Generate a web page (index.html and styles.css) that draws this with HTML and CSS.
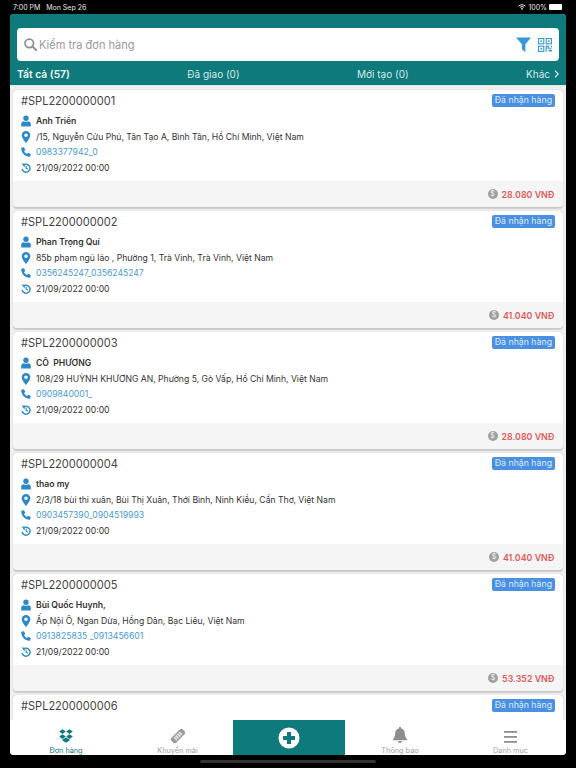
FILE: index.html
```html
<!DOCTYPE html>
<html lang="vi">
<head>
    <meta charset="UTF-8">
    <meta name="viewport" content="width=device-width, initial-scale=1.0">
    <title>Đơn hàng</title>
    <link rel="stylesheet" href="styles.css">
</head>
<body>
    <svg class="icon-defs" width="0" height="0">
        <symbol id="i-user" viewBox="0 0 10 11"><circle cx="5" cy="2.8" r="2.7"/><path d="M0.2 11V8.2C0.2 6.6 1.5 5.7 2.8 5.7C3.4 6.1 4.2 6.3 5 6.3C5.8 6.3 6.6 6.1 7.2 5.7C8.5 5.7 9.8 6.6 9.8 8.2V11Z"/></symbol>
        <symbol id="i-pin" viewBox="0 0 10 14"><path fill-rule="evenodd" d="M5 0C2.2 0 0 2.2 0 5C0 8.4 5 14 5 14C5 14 10 8.4 10 5C10 2.2 7.8 0 5 0ZM5 7.1A2.1 2.1 0 1 1 5 2.9A2.1 2.1 0 0 1 5 7.1Z"/></symbol>
        <symbol id="i-phone" viewBox="0 0 12 12"><path d="M2.9 0.3L0.9 0.9C0.4 1.1 0.1 1.5 0.2 2C0.8 7.4 4.6 11.2 10 11.8C10.5 11.9 10.9 11.6 11.1 11.1L11.7 9.1C11.8 8.8 11.7 8.5 11.4 8.3L9 7C8.7 6.9 8.4 6.9 8.2 7.2L7.2 8.4C5.7 7.6 4.4 6.3 3.6 4.8L4.8 3.8C5.1 3.6 5.1 3.3 5 3L3.7 0.6C3.5 0.3 3.2 0.2 2.9 0.3Z"/></symbol>
        <symbol id="i-history" viewBox="0 0 14 14"><path fill="none" stroke="currentColor" stroke-width="2" d="M3.2 3.1A5.6 5.6 0 1 1 1.5 8.2"/><path d="M0.4 0.8L5.4 0.8L5.4 5.8Z" transform="rotate(12 3 3)"/><path fill="none" stroke="currentColor" stroke-width="1.6" d="M7.2 3.8V7.3L9.6 8.6"/></symbol>
    </svg>

    <div class="status-bar">
        <span>7:00 PM&nbsp;&nbsp; Mon Sep 26</span>
        <div class="status-right">
            <svg width="8" height="6" viewBox="0 0 12 9" fill="none" stroke="#e8e8e8" stroke-width="1.5"><path d="M0.8 3.2C3.8 0.4 8.2 0.4 11.2 3.2M2.8 5.2C4.7 3.6 7.3 3.6 9.2 5.2"/><path fill="#e8e8e8" stroke="none" d="M6 9L4.2 7C5.2 6.2 6.8 6.2 7.8 7Z"/></svg>
            <span>100%</span>
            <div class="battery"></div>
        </div>
    </div>

    <div class="app">
        <header class="header">
            <div class="search">
                <svg class="search-icon" width="13" height="13" viewBox="0 0 14 14"><circle cx="5.7" cy="5.7" r="4.6" fill="none" stroke="#8e8e8e" stroke-width="1.9"/><path d="M9 9L13 13" stroke="#8e8e8e" stroke-width="2.2" stroke-linecap="round"/></svg>
                <span class="search-text">Kiểm tra đơn hàng</span>
                <svg class="filter-icon" width="15" height="15" viewBox="0 0 15 15"><path fill="#3a97d9" d="M0 0.5H15L9.4 7.2V15L5.9 12.2V7.2Z"/></svg>
                <svg class="qr-icon" width="14" height="14" viewBox="0 0 15 15" fill="none" stroke="#3a97d9"><rect x="0.6" y="0.6" width="5.6" height="5.6" stroke-width="1.2"/><rect x="8.8" y="0.6" width="5.6" height="5.6" stroke-width="1.2"/><rect x="0.6" y="8.8" width="5.6" height="5.6" stroke-width="1.2"/><rect x="2.6" y="2.6" width="1.7" height="1.7" fill="#3a97d9" stroke="none"/><rect x="10.7" y="2.6" width="1.7" height="1.7" fill="#3a97d9" stroke="none"/><rect x="2.6" y="10.7" width="1.7" height="1.7" fill="#3a97d9" stroke="none"/><path stroke-width="1.3" d="M8.8 14.8V8.8H11V11H14.4M14.4 8.2V10M11.2 13.2H15M12 15H15"/></svg>
            </div>
            <nav class="tabs">
                <span class="tab active">Tất cả (57)</span>
                <span class="tab">Đã giao (0)</span>
                <span class="tab">Mới tạo (0)</span>
                <span class="tab">Khác <svg width="5" height="8" viewBox="0 0 5 8"><path d="M1 0.7L4.2 4L1 7.3" fill="none" stroke="#e6f2f2" stroke-width="1.1"/></svg></span>
            </nav>
        </header>

        <main class="orders">
            <article class="card">
                <div class="card-body">
                    <div class="card-top"><span class="code">#SPL2200000001</span><span class="badge">Đã nhận hàng</span></div>
                    <div class="row name"><svg class="ico"><use href="#i-user"/></svg>Anh Triển</div>
                    <div class="row"><svg class="ico"><use href="#i-pin"/></svg>/15, Nguyễn Cửu Phú, Tân Tạo A, Bình Tân, Hồ Chí Minh, Việt Nam</div>
                    <div class="row phone"><svg class="ico"><use href="#i-phone"/></svg>0983377942_0</div>
                    <div class="row"><svg class="ico"><use href="#i-history"/></svg>21/09/2022 00:00</div>
                </div>
                <div class="card-foot"><span class="coin">$</span><span class="price">28.080 VNĐ</span></div>
            </article>

            <article class="card">
                <div class="card-body">
                    <div class="card-top"><span class="code">#SPL2200000002</span><span class="badge">Đã nhận hàng</span></div>
                    <div class="row name"><svg class="ico"><use href="#i-user"/></svg>Phan Trọng Quí</div>
                    <div class="row"><svg class="ico"><use href="#i-pin"/></svg>85b phạm ngũ lão , Phường 1, Trà Vinh, Trà Vinh, Việt Nam</div>
                    <div class="row phone"><svg class="ico"><use href="#i-phone"/></svg>0356245247_0356245247</div>
                    <div class="row"><svg class="ico"><use href="#i-history"/></svg>21/09/2022 00:00</div>
                </div>
                <div class="card-foot"><span class="coin">$</span><span class="price">41.040 VNĐ</span></div>
            </article>

            <article class="card">
                <div class="card-body">
                    <div class="card-top"><span class="code">#SPL2200000003</span><span class="badge">Đã nhận hàng</span></div>
                    <div class="row name"><svg class="ico"><use href="#i-user"/></svg>CÔ&nbsp; PHƯƠNG</div>
                    <div class="row"><svg class="ico"><use href="#i-pin"/></svg>108/29 HUỲNH KHƯƠNG AN, Phường 5, Gò Vấp, Hồ Chí Minh, Việt Nam</div>
                    <div class="row phone"><svg class="ico"><use href="#i-phone"/></svg>0909840001_</div>
                    <div class="row"><svg class="ico"><use href="#i-history"/></svg>21/09/2022 00:00</div>
                </div>
                <div class="card-foot"><span class="coin">$</span><span class="price">28.080 VNĐ</span></div>
            </article>

            <article class="card">
                <div class="card-body">
                    <div class="card-top"><span class="code">#SPL2200000004</span><span class="badge">Đã nhận hàng</span></div>
                    <div class="row name"><svg class="ico"><use href="#i-user"/></svg>thao my</div>
                    <div class="row"><svg class="ico"><use href="#i-pin"/></svg>2/3/18 bùi thi xuân, Bùi Thị Xuân, Thới Bình, Ninh Kiều, Cần Thơ, Việt Nam</div>
                    <div class="row phone"><svg class="ico"><use href="#i-phone"/></svg>0903457390_0904519993</div>
                    <div class="row"><svg class="ico"><use href="#i-history"/></svg>21/09/2022 00:00</div>
                </div>
                <div class="card-foot"><span class="coin">$</span><span class="price">41.040 VNĐ</span></div>
            </article>

            <article class="card">
                <div class="card-body">
                    <div class="card-top"><span class="code">#SPL2200000005</span><span class="badge">Đã nhận hàng</span></div>
                    <div class="row name"><svg class="ico"><use href="#i-user"/></svg>Bùi Quốc Huynh,</div>
                    <div class="row"><svg class="ico"><use href="#i-pin"/></svg>Ấp Nội Ô, Ngan Dừa, Hồng Dân, Bạc Liêu, Việt Nam</div>
                    <div class="row phone"><svg class="ico"><use href="#i-phone"/></svg>0913825835 _0913456601</div>
                    <div class="row"><svg class="ico"><use href="#i-history"/></svg>21/09/2022 00:00</div>
                </div>
                <div class="card-foot"><span class="coin">$</span><span class="price">53.352 VNĐ</span></div>
            </article>

            <article class="card">
                <div class="card-body">
                    <div class="card-top"><span class="code">#SPL2200000006</span><span class="badge">Đã nhận hàng</span></div>
                </div>
            </article>
        </main>

        <nav class="tabbar">
            <div class="tabbar-item active">
                <svg width="14" height="14" viewBox="0 0 14 14" fill="#0f7a7c"><path d="M3.5 0.3L6.8 2.6L3.5 4.9L0.2 2.6ZM10.5 0.3L13.8 2.6L10.5 4.9L7.2 2.6ZM3.5 5.3L6.8 7.6L3.5 9.9L0.2 7.6ZM10.5 5.3L13.8 7.6L10.5 9.9L7.2 7.6ZM3.5 10.6L7 8.4L10.5 10.6V11.4L7 13.7L3.5 11.4Z"/></svg>
                <span>Đơn hàng</span>
            </div>
            <div class="tabbar-item">
                <svg width="14" height="14" viewBox="0 0 14 14"><g transform="rotate(-45 7 7)"><rect x="-1" y="3.6" width="16" height="6.8" rx="0.8" fill="#9a9a9a"/><rect x="2.5" y="5" width="9" height="4" fill="#e4e4e4"/><path d="M4.5 5V9M7 5V9M9.5 5V9" stroke="#9a9a9a" stroke-width="0.9"/></g></svg>
                <span>Khuyến mãi</span>
            </div>
            <div class="tabbar-add">
                <svg width="22" height="22" viewBox="0 0 22 22"><circle cx="11" cy="11" r="10.5" fill="#fff"/><path d="M11 5V17M5 11H17" stroke="#0f7a7c" stroke-width="4"/></svg>
            </div>
            <div class="tabbar-item">
                <svg width="14" height="16" viewBox="0 0 14 16" fill="#8e8e8e"><path d="M7 0C6.3 0 5.9 0.5 5.9 1.1V1.6C3.6 2.1 2.2 4 2.2 6.3C2.2 9.6 1.4 10.6 0 12.2V13.2H14V12.2C12.6 10.6 11.8 9.6 11.8 6.3C11.8 4 10.4 2.1 8.1 1.6V1.1C8.1 0.5 7.7 0 7 0ZM5 14C5 15.1 5.9 16 7 16C8.1 16 9 15.1 9 14Z"/></svg>
                <span>Thông báo</span>
            </div>
            <div class="tabbar-item">
                <svg width="13" height="12" viewBox="0 0 13 12" fill="#8e8e8e"><rect width="13" height="1.8"/><rect y="5" width="13" height="1.8"/><rect y="10" width="13" height="1.8"/></svg>
                <span>Danh mục</span>
            </div>
        </nav>
    </div>

    <div class="home-strip"><div class="home-indicator"></div></div>
</body>
</html>
```

FILE: styles.css
```css
:root {
    --teal: #0f7a7c;
    --blue: #3a97d9;
    --text: #333333;
    --gray: #8e8e8e;
}

* {
    margin: 0;
    padding: 0;
    box-sizing: border-box;
    font-family: "Inter", "Liberation Sans", sans-serif;
}

html, body {
    height: 768px;
    overflow: hidden;
}

body {
    background-color: #000;
    display: flex;
    flex-direction: column;
}

.icon-defs {
    position: absolute;
}

.status-bar {
    height: 14px;
    padding: 0 14px 0 13px;
    display: flex;
    justify-content: space-between;
    align-items: center;
    color: #e8e8e8;
    font-size: 7px;
}

.status-right {
    display: flex;
    align-items: center;
    gap: 2px;
}

.battery {
    width: 13px;
    height: 6px;
    background-color: #fff;
    border-radius: 1px;
}

.app {
    height: 741px;
    margin: 0 10px;
    background-color: #efefef;
    border-radius: 4px;
    overflow: hidden;
    display: flex;
    flex-direction: column;
}

.header {
    background-color: var(--teal);
    padding: 14px 7px 0;
    flex-shrink: 0;
    height: 72px;
    border-bottom: 1px solid #d8eeee;
}

.search {
    height: 33px;
    background-color: #fff;
    border-radius: 4px;
    display: flex;
    align-items: center;
    padding: 0 7px;
}

.search-text {
    flex: 1;
    margin-left: 2px;
    font-size: 11.05px;
    color: #9a9a9a;
}

.filter-icon {
    margin-right: 7px;
}

.tabs {
    height: 25px;
    display: flex;
    justify-content: space-between;
    align-items: center;
}

.tab {
    font-size: 10px;
    color: #d5e8e8;
    display: flex;
    align-items: center;
    gap: 4px;
}

.tab.active {
    color: #eef7f7;
    font-size: 10.3px;
    font-weight: 600;
}

.orders {
    flex: 1;
    min-height: 0;
    overflow: hidden;
    padding: 4px 3px 0;
    display: flex;
    flex-direction: column;
    gap: 4px;
}

.card {
    height: 117px;
    flex-shrink: 0;
    background-color: #fff;
    border-radius: 4px;
    box-shadow: 0 0 1px rgba(0,0,0,0.25), 0 1.5px 1px rgba(0,0,0,0.14);
    display: flex;
    flex-direction: column;
}

.card-body {
    height: 91px;
    padding: 3px 8px 0;
}

.card-top {
    height: 15px;
    display: flex;
    justify-content: space-between;
    align-items: center;
    margin-bottom: 5.5px;
}

.code {
    font-size: 11.05px;
    color: #444;
}

.badge {
    background-color: #4a90e2;
    color: #dcecfb;
    font-size: 8.75px;
    line-height: 13.5px;
    padding: 0 3px;
    border-radius: 2px;
}

.row {
    height: 15.5px;
    display: flex;
    align-items: center;
    gap: 5px;
    font-size: 8.62px;
    color: var(--text);
}

.row.name {
    font-weight: 600;
}

.row.phone {
    color: #4a9bd4;
}

.ico {
    width: 10px;
    height: 12px;
    flex-shrink: 0;
    fill: #2d88c9;
    color: #2d88c9;
}

.card-foot {
    flex: 1;
    background-color: #f5f5f5;
    border-radius: 0 0 4px 4px;
    display: flex;
    justify-content: flex-end;
    align-items: center;
    gap: 4px;
    padding: 0 8.5px;
}

.coin {
    width: 10px;
    height: 10px;
    border-radius: 50%;
    background-color: #a0a0a0;
    color: #f5f5f5;
    font-size: 7px;
    line-height: 10px;
    text-align: center;
}

.price {
    color: #e05a5a;
    font-size: 8.85px;
    font-weight: 600;
}

.tabbar {
    position: relative;
    height: 35px;
    flex-shrink: 0;
    background-color: #fff;
    display: grid;
    grid-template-columns: 112px 111px 112px 110px 111px;
}

.tabbar-item {
    display: flex;
    flex-direction: column;
    align-items: center;
    justify-content: flex-end;
    gap: 3.5px;
    color: #a2a2a2;
    font-size: 7.3px;
}

.tabbar-item.active {
    color: var(--teal);
}

.tabbar-add {
    background-color: var(--teal);
    display: flex;
    align-items: center;
    justify-content: center;
}

.home-strip {
    flex: 1;
    display: flex;
    justify-content: center;
    padding-top: 5px;
}

.home-indicator {
    width: 176px;
    height: 3px;
    background-color: #333;
    border-radius: 2px;
}
```
